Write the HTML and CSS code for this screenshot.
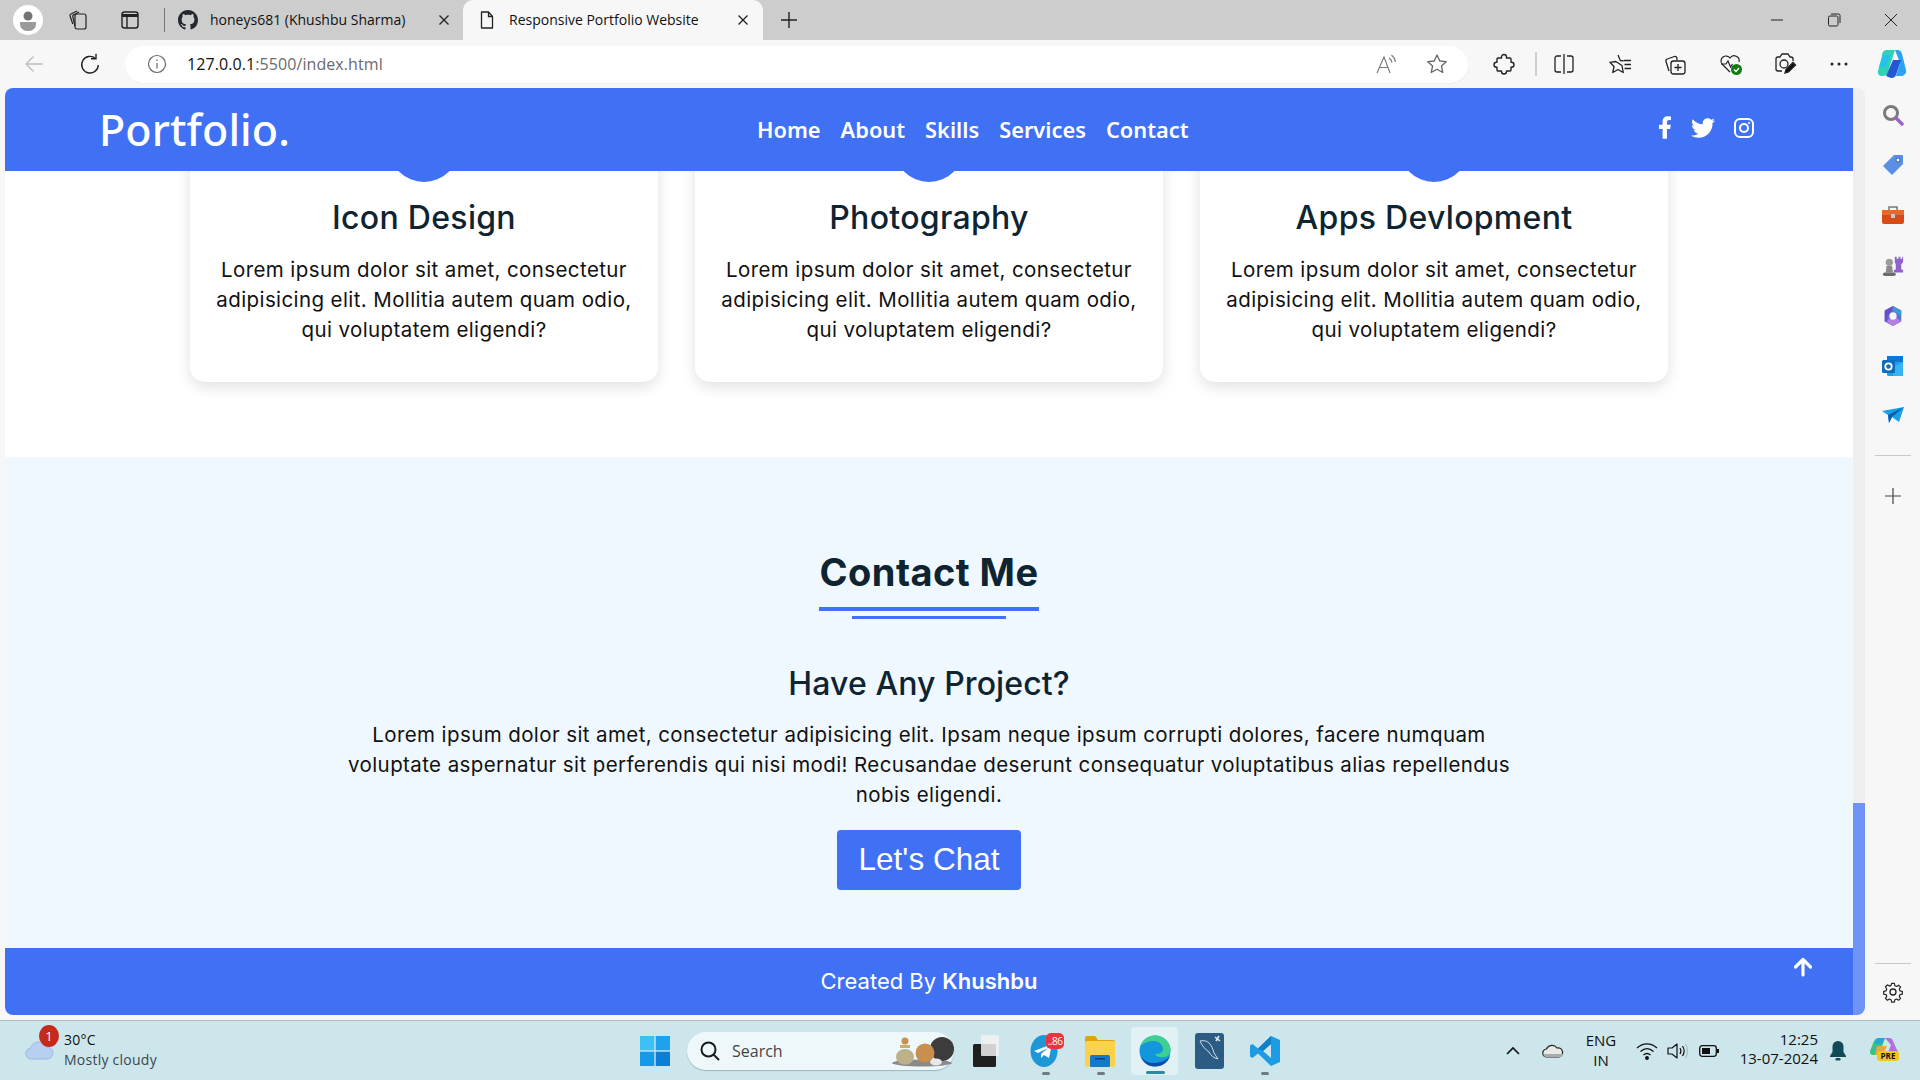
FILE: index.html
```html
<!DOCTYPE html>
<html lang="en">
<head>
<meta charset="utf-8">
<title>Responsive Portfolio Website</title>
<link rel="stylesheet" href="styles.css">
</head>
<body>
<div class="window">
  <header class="tabstrip">
    <div class="profile"><svg width="30" height="30" viewBox="0 0 30 30"><circle cx="15" cy="15" r="15" fill="#fff"/><circle cx="15" cy="11" r="4.5" fill="#757575"/><path d="M7 17h16v2a7 7 0 0 1-7 7h-2a7 7 0 0 1-7-7z" fill="#9a9a9a"/></svg></div>
    <div class="strip-btn first"><svg width="22" height="22" viewBox="0 0 22 22" fill="none" stroke="#222" stroke-width="1.200"><rect x="8" y="5" width="11" height="15" rx="2"/><path d="M8 17 5.800 7.500A1.500 1.500 0 0 1 7 5.700L12 3"/><path d="M5.800 15 3 6.800A1.500 1.500 0 0 1 4 5l6-3"/></svg></div>
    <div class="strip-btn second"><svg width="20" height="20" viewBox="0 0 20 20" fill="none" stroke="#222" stroke-width="1.4"><rect x="2" y="2" width="16" height="16" rx="2.500"/><path d="M2 5.500h16" stroke-width="3"/><path d="M7 6v12"/></svg></div>
    <div class="strip-sep"></div>
    <div class="tab">
      <svg class="tab-ico" width="20" height="20" viewBox="0 0 16 16" fill="#24292f"><path d="M8 0C3.580 0 0 3.580 0 8c0 3.540 2.290 6.530 5.470 7.590.4.070.55-.17.55-.38 0-.19-.01-.82-.01-1.490-2.010.37-2.530-.49-2.690-.94-.09-.23-.48-.94-.82-1.130-.28-.15-.68-.52-.01-.53.63-.01 1.080.58 1.230.82.720 1.210 1.870.87 2.330.66.070-.52.280-.87.510-1.070-1.780-.2-3.640-.89-3.640-3.950 0-.87.310-1.590.820-2.150-.08-.2-.36-1.020.08-2.120 0 0 .67-.21 2.200.82.640-.18 1.320-.27 2-.27s1.360.09 2 .27c1.530-1.040 2.200-.82 2.200-.82.440 1.100.160 1.920.080 2.120.510.560.820 1.270.820 2.150 0 3.070-1.870 3.750-3.650 3.950.290.250.540.730.540 1.480 0 1.070-.01 1.930-.01 2.200 0 .210.150.460.550.380A8.010 8.010 0 0 0 16 8c0-4.420-3.580-8-8-8z"/></svg>
      <span class="tab-label">honeys681 (Khushbu Sharma)</span>
      <svg class="tab-x" width="12" height="12" viewBox="0 0 12 12" stroke="#222" stroke-width="1.300"><path d="M1.500 1.500l9 9M10.500 1.500l-9 9"/></svg>
    </div>
    <div class="tab active">
      <svg class="tab-ico" width="20" height="20" viewBox="0 0 20 20" fill="none" stroke="#222" stroke-width="1.300"><path d="M4.500 2h7l4 4.500V18h-11z" stroke-linejoin="round"/><path d="M11.500 2v4.500h4"/></svg>
      <span class="tab-label">Responsive Portfolio Website</span>
      <svg class="tab-x" width="12" height="12" viewBox="0 0 12 12" stroke="#222" stroke-width="1.300"><path d="M1.500 1.500l9 9M10.500 1.500l-9 9"/></svg>
    </div>
    <div class="newtab"><svg width="18" height="18" viewBox="0 0 18 18" stroke="#222" stroke-width="1.400"><path d="M9 1v16M1 9h16"/></svg></div>
    <div class="winctl">
      <svg width="14" height="14" viewBox="0 0 14 14" stroke="#222" stroke-width="1"><path d="M1 7h12"/></svg>
      <svg width="14" height="14" viewBox="0 0 14 14" fill="none" stroke="#222" stroke-width="1"><rect x="1.500" y="3" width="9.500" height="10" rx="1.500"/><path d="M4 1h7.500A1.500 1.500 0 0 1 13 2.500V10"/></svg>
      <svg width="14" height="14" viewBox="0 0 14 14" stroke="#222" stroke-width="1"><path d="M1 1l12 12M13 1L1 13"/></svg>
    </div>
  </header>

  <nav class="toolbar">
    <svg class="back" width="20" height="20" viewBox="0 0 20 20" fill="none" stroke="#bdbdbd" stroke-width="1.300"><path d="M19 10H2M9.500 2.500 2 10l7.500 7.500"/></svg>
    <svg class="reload" width="20" height="22" viewBox="0 0 20 22" fill="none" stroke="#222" stroke-width="1.400"><path d="M15.500 5.500A8.300 8.300 0 1 0 18.300 12"/><path d="M16 .8v5h-5"/></svg>
    <div class="omnibox">
      <svg class="info" width="20" height="20" viewBox="0 0 20 20" fill="none" stroke="#666" stroke-width="1.200"><circle cx="10" cy="10" r="8.500"/><path d="M10 9v5.500M10 5.500v1.500"/></svg>
      <span class="url"><b>127.0.0.1</b>:5500/index.html</span>
      <svg class="read" width="24" height="22" viewBox="0 0 24 22" fill="none" stroke="#777" stroke-width="1.100"><path d="M2 20 9 4l6 16M4.500 14.500h9"/><path d="M14 5c1.500 1 2.500 2.500 3 4.500M16.500 2c2 1.500 3.500 4 4 7"/></svg>
      <svg class="ostar" width="22" height="22" viewBox="0 0 22 22" fill="none" stroke="#666" stroke-width="1.300"><path d="M11 2l2.800 6 6.400.7-4.800 4.300 1.400 6.500L11 16.200 5.200 19.500 6.600 13 1.800 8.700 8.200 8z" stroke-linejoin="round"/></svg>
    </div>
    <div class="tools">
      <svg class="t1" width="22" height="22" viewBox="0 0 22 22" fill="none" stroke="#222" stroke-width="1.400"><path d="M8.500 4a2.500 2.500 0 0 1 5 0v1H17a1 1 0 0 1 1 1v3.200h.5a2.500 2.500 0 0 1 0 5H18V17a1 1 0 0 1-1 1h-3.500v.5a2.500 2.500 0 0 1-5 0V18H5a1 1 0 0 1-1-1v-2.800h-.5a2.500 2.500 0 0 1 0-5H4V6a1 1 0 0 1 1-1h3.500z" stroke-linejoin="round"/></svg>
      <span class="tool-sep"></span>
      <svg class="t2" width="22" height="22" viewBox="0 0 22 22" fill="none" stroke="#222" stroke-width="1.300"><path d="M8 3H4a2 2 0 0 0-2 2v12a2 2 0 0 0 2 2h4M14 3h4a2 2 0 0 1 2 2v12a2 2 0 0 1-2 2h-4M11 1v20"/></svg>
      <svg class="t3" width="24" height="22" viewBox="0 0 24 22" fill="none" stroke="#222" stroke-width="1.300"><path d="M9 2l2.300 5.500 3.500.3M13 12.500l1.200 7L9 16.500 3.800 19.500 5 13.500.9 9.300 6.800 8.500z" stroke-linejoin="round"/><path d="M15 7.500h7M15.500 11.500h6.500M15.500 15.500h6.500"/></svg>
      <svg class="t4" width="22" height="22" viewBox="0 0 22 22" fill="none" stroke="#222" stroke-width="1.300"><rect x="7" y="8" width="14" height="13" rx="2.500"/><path d="M14 11v7M10.500 14.500h7"/><path d="M5 18 2 8.500A2 2 0 0 1 3.300 6l7-2.500a2 2 0 0 1 2.500 1.200L13 7"/></svg>
      <svg class="t5" width="24" height="24" viewBox="0 0 24 24" fill="none" stroke="#222" stroke-width="1.200"><path d="M11 20 3 12a5 5 0 0 1 8-6 5 5 0 0 1 9 4"/><path d="M2 12h5l2-3 2.500 6 2-3"/><circle cx="17.500" cy="17.500" r="5.500" fill="#107c10" stroke="none"/><path d="M15 17.500l2 2 3-3.500" stroke="#fff" stroke-width="1.300"/></svg>
      <svg class="t6" width="24" height="24" viewBox="0 0 24 24" fill="none" stroke="#222" stroke-width="1.300"><path d="M9 19H5a2 2 0 0 1-2-2V7a2 2 0 0 1 2-2h2l2-3h6l2 3h1a3 3 0 0 1 2 1v3"/><circle cx="11" cy="12" r="4"/><path d="M12 21l1-3.500 7-7 2.500 2.500-7 7z" fill="#111"/></svg>
      <svg class="t7" width="18" height="6" viewBox="0 0 18 6" fill="#222"><circle cx="2" cy="3" r="1.500"/><circle cx="9" cy="3" r="1.500"/><circle cx="16" cy="3" r="1.500"/></svg>
      <svg class="t8" width="30" height="32" viewBox="0 0 30 32"><path d="M9 2h9l-7 22a6 6 0 0 1-6 4H4A4 4 0 0 1 1 23L5 8a6 6 0 0 1 4-6z" fill="#2ed3b7"/><path d="M18 2h3a5 5 0 0 1 4 4l4 16a5 5 0 0 1-4 6h-6l4-13z" fill="#2aa3f0"/><path d="M9 28 16 12h8l-5 15a5 5 0 0 1-5 3z" fill="#2456d6"/><path d="M6 7h8l-5 12H2z" fill="#27c2e8"/></svg>
    </div>
  </nav>

  <div class="body-row">
    <main class="page-col">
      <div class="page">
        <div class="sitenav">
          <a class="logo">Portfolio.</a>
          <ul class="links">
            <li>Home</li><li>About</li><li>Skills</li><li>Services</li><li>Contact</li>
          </ul>
          <div class="social">
            <svg width="14" height="23" viewBox="0 0 320 512" fill="#fff"><path d="M279.14 288l14.22-92.66h-88.91v-60.13c0-25.35 12.42-50.06 52.24-50.06h40.42V6.26S260.43 0 225.36 0c-73.22 0-121.08 44.38-121.08 124.72v70.62H22.89V288h81.39v224h100.17V288z"/></svg>
            <svg width="24" height="24" viewBox="0 0 512 512" fill="#fff"><path d="M459.37 151.716c.325 4.548.325 9.097.325 13.645 0 138.72-105.583 298.558-298.558 298.558-59.452 0-114.68-17.219-161.137-47.106 8.447.974 16.568 1.299 25.34 1.299 49.055 0 94.213-16.568 130.274-44.832-46.132-.975-84.792-31.188-98.112-72.772 6.498.974 12.995 1.624 19.818 1.624 9.421 0 18.843-1.3 27.614-3.573-48.081-9.747-84.143-51.98-84.143-102.985v-1.299c13.969 7.797 30.214 12.67 47.431 13.319-28.264-18.843-46.781-51.005-46.781-87.391 0-19.492 5.197-37.36 14.294-52.954 51.655 63.675 129.3 105.258 216.365 109.807-1.624-7.797-2.599-15.918-2.599-24.04 0-57.828 46.782-104.934 104.934-104.934 30.213 0 57.502 12.67 76.67 33.137 23.715-4.548 46.456-13.32 66.599-25.34-7.798 24.366-24.366 44.833-46.132 57.827 21.117-2.273 41.584-8.122 60.426-16.243-14.292 20.791-32.161 39.308-52.628 54.253z"/></svg>
            <svg width="20" height="20" viewBox="0 0 20 20" fill="none" stroke="#fff" stroke-width="2"><rect x="1" y="1" width="18" height="18" rx="5"/><circle cx="10" cy="10" r="4"/><circle cx="15" cy="5" r="1.100" fill="#fff" stroke="none"/></svg>
          </div>
        </div>
        <div class="scroller">
          <section class="services">
            <article class="card">
              <div class="badge"></div>
              <h3>Icon Design</h3>
              <p>Lorem ipsum dolor sit amet, consectetur adipisicing elit. Mollitia autem quam odio, qui voluptatem eligendi?</p>
            </article>
            <article class="card">
              <div class="badge"></div>
              <h3>Photography</h3>
              <p>Lorem ipsum dolor sit amet, consectetur adipisicing elit. Mollitia autem quam odio, qui voluptatem eligendi?</p>
            </article>
            <article class="card">
              <div class="badge"></div>
              <h3>Apps Devlopment</h3>
              <p>Lorem ipsum dolor sit amet, consectetur adipisicing elit. Mollitia autem quam odio, qui voluptatem eligendi?</p>
            </article>
          </section>
          <section class="contact">
            <h2>Contact Me</h2>
            <div class="rule-long"></div>
            <div class="rule-short"></div>
            <h4>Have Any Project?</h4>
            <p>Lorem ipsum dolor sit amet, consectetur adipisicing elit. Ipsam neque ipsum corrupti dolores, facere numquam voluptate aspernatur sit perferendis qui nisi modi! Recusandae deserunt consequatur voluptatibus alias repellendus nobis eligendi.</p>
            <button class="chat">Let's Chat</button>
          </section>
          <footer class="sitefoot">
            <span>Created By <b>Khushbu</b></span>
            <svg class="totop" width="20" height="20" viewBox="0 0 20 20" fill="none" stroke="#fff" stroke-width="3.200" stroke-linecap="round" stroke-linejoin="round"><path d="M10 18V3M2.500 10 10 2.500 17.500 10"/></svg>
          </footer>
        </div>
      </div>
      <div class="scrollbar"><div class="thumb"></div></div>
    </main>
    <aside class="sidebar">
      <svg width="22" height="22" viewBox="0 0 22 22" fill="none"><circle cx="9" cy="9" r="6.500" stroke="#7a7a7a" stroke-width="3"/><path d="M14 14l6 6" stroke="#9a62c9" stroke-width="3.500" stroke-linecap="round"/></svg>
      <svg width="22" height="22" viewBox="0 0 22 22"><path d="M12 1h8a1 1 0 0 1 1 1v8L10 21 1 12z" fill="#5b8fe6"/><circle cx="16" cy="6" r="2" fill="#fff" stroke="#3560b0"/></svg>
      <svg width="24" height="22" viewBox="0 0 24 22"><path d="M8 6V3h8v3" fill="none" stroke="#777" stroke-width="1.500"/><rect x="1" y="6" width="22" height="14" rx="2" fill="#d84a16"/><rect x="1" y="6" width="22" height="5" fill="#e8692a"/><rect x="10" y="10" width="4" height="4" fill="#c9c9c9"/></svg>
      <svg width="24" height="22" viewBox="0 0 24 24"><path d="M14 2h2v2h2V2h2v2h2V2h1v6l-2 2v6h2v3H13v-3h2v-6l-1-2z" fill="#8f63c9"/><circle cx="8" cy="8" r="4" fill="#9c9c9c"/><path d="M5 12h6l1 7H4z" fill="#8a8a8a"/><rect x="1" y="19" width="14" height="4" rx="2" fill="#6c6c6c"/></svg>
      <svg width="22" height="22" viewBox="0 0 22 24"><path d="M11 1l9 5v12l-9 5-9-5V6z" fill="#5f6fd8"/><path d="M11 1l9 5v6l-5-3-4-2z" fill="#3a9bd9"/><path d="M2 18l9 5 9-5-5-4-8 1z" fill="#b37fe0"/><path d="M2 6l9-5-2 8-4 3v6l-3 0z" fill="#6a4fc4"/><circle cx="11" cy="12" r="4" fill="#f7f7f7"/></svg>
      <svg width="22" height="22" viewBox="0 0 22 22"><rect x="5" y="1" width="16" height="20" rx="1.500" fill="#1ba1e8"/><path d="M5 1h16v6H5z" fill="#0f78d4"/><path d="M11 12l10-5v14H11z" fill="#36b3f0"/><rect x="0" y="5" width="13" height="13" rx="1.500" fill="#0f6cbd"/><circle cx="6.500" cy="11.500" r="3.200" fill="none" stroke="#fff" stroke-width="1.800"/></svg>
      <svg width="22" height="22" viewBox="0 0 22 18"><path d="M0 4 22 0 17 15l-7-5-3 6-1-8z" fill="#18a0e8"/><path d="M6 8 22 0l-12 10-3 6z" fill="#0b5ea8"/></svg>
      <div class="side-rule"></div>
      <svg class="side-plus" width="16" height="16" viewBox="0 0 16 16" stroke="#444" stroke-width="1.200"><path d="M8 0v16M0 8h16"/></svg>
      <div class="side-bottom">
        <div class="side-rule"></div>
        <svg width="22" height="22" viewBox="0 0 22 22" fill="none" stroke="#222" stroke-width="1.300"><circle cx="11" cy="11" r="3"/><path d="M9.500 1.500h3l.6 2.600 1.800.8 2.300-1.400 2.100 2.100-1.400 2.300.8 1.800 2.600.6v3l-2.600.6-.8 1.800 1.400 2.300-2.100 2.100-2.300-1.400-1.800.8-.6 2.600h-3l-.6-2.600-1.800-.8-2.300 1.400-2.100-2.100 1.400-2.300-.8-1.800-2.600-.6v-3l2.600-.6.8-1.800L2.700 5.200 4.800 3.100l2.300 1.400 1.800-.8z" stroke-linejoin="round" transform="translate(1.050 1.050) scale(.905)"/></svg>
      </div>
    </aside>
  </div>

  <footer class="taskbar">
    <div class="weather">
      <div class="wx-icon">
        <svg width="30" height="24" viewBox="0 0 32 26"><circle cx="24" cy="5" r="4" fill="#f08a1d"/><path d="M7 25a6 6 0 0 1-1-12 9 9 0 0 1 17-1 6.500 6.500 0 0 1 1 13z" fill="#b7d0f2" stroke="#8fb0e0" stroke-width=".8"/></svg>
        <span class="wx-badge">1</span>
      </div>
      <div class="wx-text"><span>30°C</span><span class="wx-sub">Mostly cloudy</span></div>
    </div>
    <div class="centre">
      <svg class="start" width="30" height="30" viewBox="0 0 30 30"><rect width="14.300" height="14.300" fill="#3cc0f5"/><rect x="15.700" width="14.300" height="14.300" fill="#1ea2ec"/><rect y="15.700" width="14.300" height="14.300" fill="#139ae8"/><rect x="15.700" y="15.700" width="14.300" height="14.300" fill="#0a7fd8"/></svg>
      <div class="search">
        <svg width="22" height="22" viewBox="0 0 22 22" fill="none" stroke="#1a1a1a" stroke-width="2"><circle cx="9.500" cy="9.500" r="7"/><path d="M14.500 14.500l5.500 5.500"/></svg>
        <span>Search</span>
        <svg class="doodle" width="62" height="32" viewBox="0 0 62 32"><ellipse cx="30" cy="28" rx="30" ry="3.500" fill="#8a8a8a"/><circle cx="50" cy="14" r="12" fill="#3c3c3c"/><circle cx="33" cy="18" r="9.500" fill="#c98f4e"/><path d="M4 22a9 8 0 0 1 18 0 7 6 0 0 1-18 0z" fill="#bdb189"/><circle cx="13" cy="6" r="3.500" fill="#c98f4e"/><rect x="8" y="10" width="10" height="3" fill="#c4b26c"/><ellipse cx="44" cy="27" rx="6" ry="3.500" fill="#e8e8e8"/></svg>
      </div>
      <svg class="taskview" width="26" height="32" viewBox="0 0 26 32"><rect x="0" y="9" width="23" height="23" rx="1.500" fill="#1f1f1f"/><rect x="8" y="0" width="18" height="21" rx="1" fill="#f1f1f1" opacity=".85"/></svg>
      <div class="app telegram">
        <svg width="30" height="36" viewBox="0 0 30 36"><ellipse cx="14" cy="18" rx="13.500" ry="16" fill="#1f97d6"/><path d="M4 18l18-7-3 14-5-3-3 3v-4l7-6-10 5z" fill="#fff"/></svg>
        <span class="tg-badge">..86</span>
      </div>
      <svg class="files" width="30" height="32" viewBox="0 0 30 32"><path d="M0 3a2 2 0 0 1 2-2h8l3 4h15a2 2 0 0 1 2 2v3H0z" fill="#e0a30a"/><rect y="6" width="30" height="26" rx="1.500" fill="#fcd24c"/><rect x="5" y="20" width="20" height="12" rx="1.500" fill="#1479cd"/><rect x="10" y="23" width="10" height="1.500" fill="#0a3f7a"/></svg>
      <div class="edge-slot">
        <svg width="32" height="32" viewBox="0 0 32 32"><circle cx="16" cy="16" r="15.500" fill="#1496dd"/><path d="M1.500 12C4 4.500 10 .5 16 .5c9 0 15.500 7 15.500 14.500 0 2-1 5-4 6.500-4 1.500-10 1-11.500-2.500 4 0 8-1 8-5 0-5-5-8-9-8-5 0-11 2-14.500 6z" fill="#3ed08f"/><path d="M31 21c-2 6.500-8 10.500-15 10.500-7 0-12-4-14-10 3 4 7 6.500 12 6.500 7 0 13-2 17-7z" fill="#0b4ea8"/></svg>
        <i class="edge-line"></i>
      </div>
      <svg class="mysql" width="29" height="36" viewBox="0 0 29 36"><rect width="29" height="36" rx="3" fill="#2c5c84"/><path d="M5 8c8-2 12 4 14 12l4 6c-4-1-7-3-9-7-3-2-7-6-9-11z" fill="none" stroke="#cfdde8" stroke-width="1"/><path d="M20 4l5 4M24 3l-3 5" stroke="#dfe8ef" stroke-width="1.600"/></svg>
      <svg class="vscode" width="30" height="30" viewBox="0 0 30 30"><path d="M21 0l9 4v22l-9 4L8 17.500 2.500 22 0 20.500V9.500L2.500 8 8 12.500zM21 8l-8 7 8 7z" fill="#1d9ce5"/><path d="M21 0v8l-8 7-5-2.500z" fill="#0f7fc7"/></svg>
      <i class="dot d1"></i><i class="dot d2"></i><i class="dot d3"></i>
    </div>
    <div class="tray">
      <svg class="tr-chev" width="14" height="9" viewBox="0 0 14 9" fill="none" stroke="#111" stroke-width="1.600"><path d="M1 8l6-6 6 6"/></svg>
      <svg class="tr-cloud" width="22" height="14" viewBox="0 0 22 14"><path d="M5 13a4 4 0 0 1-.5-8A6 6 0 0 1 15 4a4.500 4.500 0 0 1 2 9z" fill="#e8e8e8" stroke="#222" stroke-width="1.200"/><path d="M1 10h20l-1 3H3z" fill="#aaa"/></svg>
      <div class="tr-lang"><span>ENG</span><span>IN</span></div>
      <svg class="tr-wifi" width="22" height="18" viewBox="0 0 22 18" fill="none" stroke="#111" stroke-width="1.300"><path d="M1 6c6-5.500 14-5.500 20 0M4.500 9.500c4-3.500 9-3.500 13 0M7.500 13c2-1.700 5-1.700 7 0"/><circle cx="11" cy="16" r="1.300" fill="#111"/></svg>
      <svg class="tr-vol" width="22" height="18" viewBox="0 0 22 18" fill="none" stroke="#111" stroke-width="1.200"><path d="M1 6h4l5-4v14l-5-4H1z" stroke-linejoin="round"/><path d="M13 6c1.200 2 1.200 4 0 6M15.500 4c2 3 2 7 0 10"/><path d="M18.500 2c2.500 4 2.500 10 0 14" stroke="#a9bcc1"/></svg>
      <svg class="tr-batt" width="20" height="12" viewBox="0 0 20 12"><rect x=".7" y=".7" width="16.600" height="10.600" rx="2.500" fill="none" stroke="#111" stroke-width="1.300"/><rect x="3" y="3" width="8" height="6" fill="#111"/><rect x="18" y="4" width="2" height="4" fill="#111"/></svg>
      <div class="tr-clock"><span>12:25</span><span>13-07-2024</span></div>
      <svg class="tr-bell" width="16" height="20" viewBox="0 0 16 20" fill="#134a58"><path d="M8 0a5.500 5.500 0 0 1 5.500 5.500V11l2.500 4v1H0v-1l2.500-4V5.500A5.500 5.500 0 0 1 8 0z"/><rect x="5.500" y="17" width="5" height="2.500" rx="1.200"/></svg>
      <div class="tr-copilot">
        <svg width="28" height="22" viewBox="0 0 28 22"><path d="M8 1h7L9 18H3a3 3 0 0 1-3-4L4 4a5 5 0 0 1 4-3z" fill="#35c48a"/><path d="M15 1h4a4 4 0 0 1 4 3l4 9a3 3 0 0 1-3 5h-7l4-10z" fill="#b36fe0"/><path d="M7 9h10l-4 9H5z" fill="#e9a83d"/><path d="M8 1h7l-3 6H4z" fill="#2d9fe8"/></svg>
        <span>PRE</span>
      </div>
    </div>
  </footer>
</div>
</body>
</html>
```

FILE: styles.css
```css
* { box-sizing: border-box; margin: 0; padding: 0; }
html, body { width: 100%; height: 100%; overflow: hidden; }
body { font-family: "Open Sans", "Noto Sans", sans-serif; color: #111; background: #f7f7f7; }
svg { display: block; flex: none; }
.window { display: flex; flex-direction: column; height: 1080px; width: 1920px; }

/* tab strip */
.tabstrip { height: 40px; flex: none; background: #cdcdcd; display: flex; align-items: center; padding-left: 13px; }
.strip-btn.first { margin-left: 24px; }
.strip-btn.second { margin-left: 31px; }
.strip-sep { width: 1px; height: 24px; background: #777; margin-left: 24px; }
.tab { display: flex; align-items: center; height: 40px; width: 298px; padding-left: 13px; font-size: 14px; letter-spacing: 0; }
.tab-label { margin-left: 12px; flex: 1; white-space: nowrap; padding-bottom: 2px; }
.tab-x { margin-right: 13px; }
.tab.active { background: #f7f7f7; width: 300px; border-radius: 10px 10px 0 0; padding-left: 14px; margin-left: 0; }
.tab.active .tab-x { margin-right: 14px; }
.newtab { margin-left: 17px; }
.winctl { margin-left: auto; display: flex; gap: 43px; padding-right: 22px; }

/* toolbar */
.toolbar { height: 48px; flex: none; background: #f7f7f7; display: flex; align-items: center; padding-left: 24px; }
.reload { margin-left: 36px; }
.omnibox { margin-left: 25px; width: 1343px; height: 37px; background: #fff; border-radius: 19px; display: flex; align-items: center; padding-left: 22px; box-shadow: 0 1px 2px rgba(0,0,0,.04); }
.url { margin-left: 20px; font-size: 16px; color: #6b6b6b; letter-spacing: .08px; flex: 1; padding-bottom: 1px; }
.url b { font-weight: 400; color: #111; }
.ostar { margin-left: 27px; margin-right: 20px; }
.tools { display: flex; align-items: center; margin-left: 25px; }
.tool-sep { width: 2px; height: 24px; background: #cfcfcf; margin-left: 20px; }
.t2 { margin-left: 16px; }
.t3 { margin-left: 34px; }
.t4 { margin-left: 31px; }
.t5 { margin-left: 33px; }
.t6 { margin-left: 30px; }
.t7 { margin-left: 33px; }
.t8 { margin-left: 29px; }

/* main row */
.body-row { flex: 1; min-height: 0; display: flex; }
.page-col { width: 1866px; flex: none; display: flex; padding: 0 1px 5px 5px; }
.page { width: 1848px; flex: none; display: flex; flex-direction: column; min-height: 0; border-radius: 8px 0 0 8px; overflow: hidden; background: #fff; }
.scrollbar { width: 12px; background: #efefef; border-radius: 0 8px 8px 0; display: flex; flex-direction: column; justify-content: flex-end; }
.thumb { height: 212px; background: #6f93f7; border-radius: 0 0 8px 0; }

/* site nav */
.sitenav { height: 83px; flex: none; background: #4070f4; color: #fff; display: flex; align-items: center; padding-left: 94px; position: relative; z-index: 1; }
.logo { font-family: "Noto Sans", sans-serif; font-size: 43px; font-weight: 500; letter-spacing: .1px; width: 658px; flex: none; }
.links { list-style: none; display: flex; gap: 20px; font-family: "Noto Sans", sans-serif; font-size: 21.800px; font-weight: 600; }
.social { margin-left: auto; margin-right: 99px; display: flex; align-items: center; gap: 19px; position: relative; top: -2px; }

/* scrolled content */
.scroller { flex: 1; min-height: 0; overflow: hidden; }
.services { display: flex; justify-content: center; gap: 37px; margin-top: -111px; padding-bottom: 75px; }
.card { width: 468px; height: 322px; background: #fff; border-radius: 15px; box-shadow: 0 5px 15px rgba(0,0,0,.12); text-align: center; padding: 52px 20px 0; }
.badge { width: 70px; height: 70px; background: #4070f4; border-radius: 50%; margin: 0 auto; }
.card h3 { font-family: "Inter", sans-serif; font-size: 32px; font-weight: 500; letter-spacing: .3px; line-height: 40px; color: #0e2431; margin-top: 16px; }
.card p { font-family: "Inter", sans-serif; font-size: 20.500px; letter-spacing: .4px; line-height: 30px; color: #111; margin-top: 17px; }

/* contact */
.contact { background: #f0f8ff; height: 491px; display: flex; flex-direction: column; align-items: center; padding-top: 92px; text-align: center; }
.contact h2 { font-family: "Inter", sans-serif; font-size: 38px; font-weight: 700; letter-spacing: .45px; line-height: 46px; color: #0e2431; }
.rule-long { width: 220px; height: 4px; background: #4070f4; margin-top: 12px; }
.rule-short { width: 154px; height: 3px; background: #4070f4; margin-top: 5px; }
.contact h4 { font-family: "Inter", sans-serif; font-size: 32px; font-weight: 500; letter-spacing: .1px; line-height: 40px; color: #0e2431; margin-top: 45px; }
.contact p { font-family: "Inter", sans-serif; font-size: 20.500px; letter-spacing: .4px; line-height: 30px; width: 1190px; margin-top: 16px; color: #111; }
.chat { font-family: "Liberation Sans", Arial, sans-serif; width: 184px; height: 60px; margin-top: 20px; background: #4070f4; color: #fff; border: 0; border-radius: 4px; font-size: 31.500px; padding-bottom: 2px; }

/* footer */
.sitefoot { position: relative; height: 67px; background: #4070f4; color: #fff; display: flex; align-items: center; justify-content: center; padding-bottom: 2px; font-family: "Inter", sans-serif; font-size: 22px; font-weight: 400; }
.sitefoot b { font-weight: 600; }
.totop { position: absolute; right: 40px; top: 9px; }

/* sidebar */
.sidebar { width: 54px; flex: none; display: flex; flex-direction: column; align-items: center; padding: 16px 0 17px; gap: 28.200px; height: 932px; }
.side-rule { width: 36px; height: 1px; background: #c9c9c9; }
.side-plus { margin-top: 3px; }
.side-bottom { margin-top: auto; display: flex; flex-direction: column; align-items: center; gap: 17px; }

/* taskbar */
.taskbar { height: 60px; flex: none; background: #cde6ec; border-top: 1px solid #a9bdc3; display: flex; align-items: center; position: relative; }
.weather { width: 640px; flex: none; display: flex; align-items: center; padding-left: 25px; }
.wx-icon { position: relative; width: 32px; height: 30px; margin-top: 0; }
.wx-badge { position: absolute; left: 14px; top: -11px; width: 20px; height: 22px; border-radius: 50%; background: #c42b1c; color: #fff; font-size: 13px; line-height: 22px; text-align: center; }
.wx-text { display: flex; flex-direction: column; margin-left: 7px; font-size: 14px; line-height: 20px; letter-spacing: .25px; margin-bottom: 2px; }
.wx-sub { color: #38484d; }
.centre { display: flex; align-items: center; width: 640px; flex: none; position: relative; height: 58px; }
.search { margin-left: 17px; width: 273px; height: 38px; background: #eef8fa; border-radius: 19px; box-shadow: 0 1px 1px rgba(80,110,120,.4); display: flex; align-items: center; padding-left: 12px; font-size: 16px; color: #444; }
.search span { margin-left: 11px; flex: 1; }
.doodle { margin-right: 0; }
.taskview { margin-left: 19px; }
.app.telegram { position: relative; margin-left: 31px; }
.tg-badge { position: absolute; left: 16px; top: 0; width: 18px; height: 16px; background: #e8363b; color: #fff; border-radius: 5px; font-size: 10px; line-height: 16px; text-align: center; letter-spacing: -.5px; }
.files { margin-left: 25px; }
.edge-slot { margin-left: 16px; width: 48px; height: 48px; background: #e1f1f4; border-radius: 4px; display: flex; align-items: center; justify-content: center; position: relative; }
.edge-line { position: absolute; left: 15px; bottom: 1px; width: 19px; height: 3px; border-radius: 2px; background: #2b8a9e; }
.mysql { margin-left: 17px; }
.vscode { margin-left: 26px; }
.dot { position: absolute; top: 50px; width: 8px; height: 3px; background: #6d7c80; border-radius: 2px; }
.d1 { left: 402px; } .d2 { left: 457px; } .d3 { left: 621px; }
.tray { flex: 1; display: flex; align-items: center; height: 58px; }
.tr-chev { margin-left: 226px; }
.tr-cloud { margin-left: 22px; }
.tr-lang { display: flex; flex-direction: column; align-items: center; margin-left: 20px; width: 34px; font-size: 15px; line-height: 20px; margin-bottom: 1px; }
.tr-wifi { margin-left: 18px; }
.tr-vol { margin-left: 9px; }
.tr-batt { margin-left: 10px; }
.tr-clock { width: 99px; margin-left: 0; display: flex; flex-direction: column; align-items: flex-end; font-size: 15px; line-height: 19px; margin-bottom: 3px; }
.tr-bell { margin-left: 12px; }
.tr-copilot { position: relative; margin-left: 24px; width: 28px; height: 28px; }
.tr-copilot span { position: absolute; left: 7px; top: 14px; width: 22px; height: 10px; background: #f5c518; border-radius: 3px; color: #111; font-size: 8px; font-weight: 700; line-height: 10px; text-align: center; }
```
